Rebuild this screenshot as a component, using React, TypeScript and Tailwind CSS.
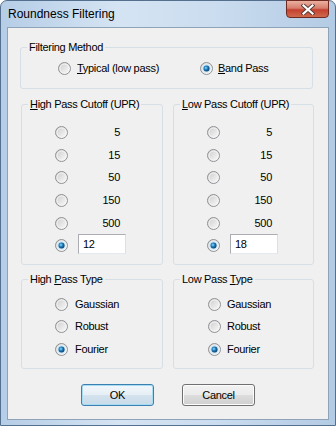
import React from "react";

function Radio({ checked = false }: { checked?: boolean }) {
  return (
    <svg width="13" height="13" viewBox="0 0 13 13" className="shrink-0 block">
      <defs>
        <linearGradient id="rr" x1="0" y1="0" x2="1" y2="1">
          <stop offset="0" stopColor="#c9c9c9" />
          <stop offset="1" stopColor="#ffffff" />
        </linearGradient>
        <radialGradient id="rd" cx="0.4" cy="0.4" r="0.7">
          <stop offset="0" stopColor="#8ee0ff" />
          <stop offset="0.45" stopColor="#1d78b8" />
          <stop offset="1" stopColor="#0b2f55" />
        </radialGradient>
      </defs>
      <circle cx="6.5" cy="6.5" r="6" fill="url(#rr)" stroke="#8f9296" strokeWidth="1" />
      <circle cx="6.5" cy="6.5" r="4.5" fill="none" stroke="#f4f4f4" strokeWidth="1" />
      {checked && (
        <>
          <circle cx="6.5" cy="6.5" r="4" fill="#c6e6f7" />
          <circle cx="6.5" cy="6.5" r="3" fill="url(#rd)" />
        </>
      )}
    </svg>
  );
}

function U({ children }: { children: React.ReactNode }) {
  return <span className="underline underline-offset-[1px]">{children}</span>;
}

function Legend({ children }: { children: React.ReactNode }) {
  return <legend className="ml-[6px] px-[2px] leading-[13px] h-[13px]">{children}</legend>;
}

function CutoffGroup({
  title,
  value,
  width,
  pl,
  labelW,
}: {
  title: React.ReactNode;
  value: string;
  width: string;
  pl: string;
  labelW: string;
}) {
  const vals = ["5", "15", "50", "150", "500"];
  return (
    <fieldset className={`${width} h-[167px] border border-[#d5dfe5] rounded-[3px]`}>
      <Legend>{title}</Legend>
      <div className={`flex flex-col pt-[10px] ${pl}`}>
        {vals.map((v) => (
          <div key={v} className="flex items-center h-[22.7px]">
            <Radio />
            <span className={`${labelW} text-right`}>{v}</span>
          </div>
        ))}
        <div className="flex items-center h-[22.7px]">
          <Radio checked />
          <input
            readOnly
            value={value}
            className="ml-[10px] w-[48px] h-[20px] -mt-[3px] bg-white border border-[#abadb3] border-b-[#e3e9ef] border-r-[#dbdfe6] px-[4px] text-[11px] outline-none"
          />
        </div>
      </div>
    </fieldset>
  );
}

function TypeGroup({ title, width, pl, gap }: { title: React.ReactNode; width: string; pl: string; gap: string }) {
  const items = ["Gaussian", "Robust", "Fourier"];
  return (
    <fieldset className={`${width} h-[96px] border border-[#d5dfe5] rounded-[3px]`}>
      <Legend>{title}</Legend>
      <div className={`flex flex-col pt-[7px] ${pl}`}>
        {items.map((t, i) => (
          <div key={t} className="flex items-center h-[22.5px]">
            <Radio checked={i === 2} />
            <span className={gap}>{t}</span>
          </div>
        ))}
      </div>
    </fieldset>
  );
}

const btn =
  "w-[73px] h-[22px] rounded-[3px] text-[11px] text-black flex items-center justify-center";

export default function App() {
  return (
    <div
      className="w-[336px] h-[426px] rounded-t-[7px] border border-[#54708e] bg-[linear-gradient(90deg,#b5cde6_0%,#d5e4f3_35%,#cadcef_65%,#b3cbe4_100%)] flex flex-col"
      style={{ fontFamily: '"Liberation Sans", Arial, sans-serif' }}
    >
      <div className="h-[26px] flex items-start justify-between shrink-0">
        <div className="pl-[7px] pt-[6px] text-[12px] leading-[14px] text-black">Roundness Filtering</div>
        <div className="mr-[6px] w-[43px] h-[18px] -mt-[1px] rounded-b-[4px] border border-[#6e2a20] bg-[linear-gradient(180deg,#eab0a0_0%,#d77d6c_45%,#c4412f_55%,#cf6a4d_100%)] flex items-center justify-center">
          <svg width="14" height="11" viewBox="0 0 14 11">
            <path d="M2.5 1.5 L11.5 9.5 M11.5 1.5 L2.5 9.5" stroke="#5a3a34" strokeWidth="4" strokeLinecap="square" />
            <path d="M2.5 1.5 L11.5 9.5 M11.5 1.5 L2.5 9.5" stroke="#ffffff" strokeWidth="2.2" strokeLinecap="square" />
          </svg>
        </div>
      </div>
      <div className="ml-[6px] w-[322px] h-[393px] border border-[#8ea3b8] bg-[#f0f0f0] text-[11px] leading-[13px] text-black tracking-[-0.3px]">
        <div className="pl-[12px] pt-[13px] flex flex-col">
          <fieldset className="w-[293px] h-[48px] border border-[#d5dfe5] rounded-[3px]">
            <Legend>Filtering Method</Legend>
            <div className="flex items-center h-[20px] mt-[4px] pl-[37px]">
              <div className="flex items-center w-[142px]">
                <Radio />
                <span className="ml-[6px]">
                  <U>T</U>ypical (low pass)
                </span>
              </div>
              <Radio checked />
              <span className="ml-[5px]">
                <U>B</U>and Pass
              </span>
            </div>
          </fieldset>
          <div className="flex gap-[10px] mt-[9px] ml-[1px]">
            <CutoffGroup
              title={
                <>
                  <U>H</U>igh Pass Cutoff (UPR)
                </>
              }
              value="12"
              width="w-[142px]"
              pl="pl-[33px]"
              labelW="w-[52px]"
            />
            <CutoffGroup
              title={
                <>
                  <U>L</U>ow Pass Cutoff (UPR)
                </>
              }
              value="18"
              width="w-[141px]"
              pl="pl-[33px]"
              labelW="w-[52px]"
            />
          </div>
          <div className="flex gap-[10px] mt-[8px] ml-[1px]">
            <TypeGroup
              title={
                <>
                  High <U>P</U>ass Type
                </>
              }
              width="w-[142px]"
              pl="pl-[33px]"
              gap="ml-[7px]"
            />
            <TypeGroup
              title={
                <>
                  Low Pass <U>T</U>ype
                </>
              }
              width="w-[141px]"
              pl="pl-[34px]"
              gap="ml-[6px]"
            />
          </div>
          <div className="flex justify-center gap-[28px] mt-[15px] pr-[12px]">
            <div
              className={`${btn} border border-[#3c7fb1] bg-[linear-gradient(180deg,#f2f7fb_0%,#e6eff6_50%,#d4e3ee_50%,#c8dae8_100%)] shadow-[inset_0_0_0_1px_#a8dcf3]`}
            >
              OK
            </div>
            <div
              className={`${btn} border border-[#707070] bg-[linear-gradient(180deg,#f2f2f2_0%,#ebebeb_50%,#dddddd_50%,#cfcfcf_100%)] shadow-[inset_0_0_0_1px_#fcfcfc]`}
            >
              Cancel
            </div>
          </div>
        </div>
      </div>
    </div>
  );
}
